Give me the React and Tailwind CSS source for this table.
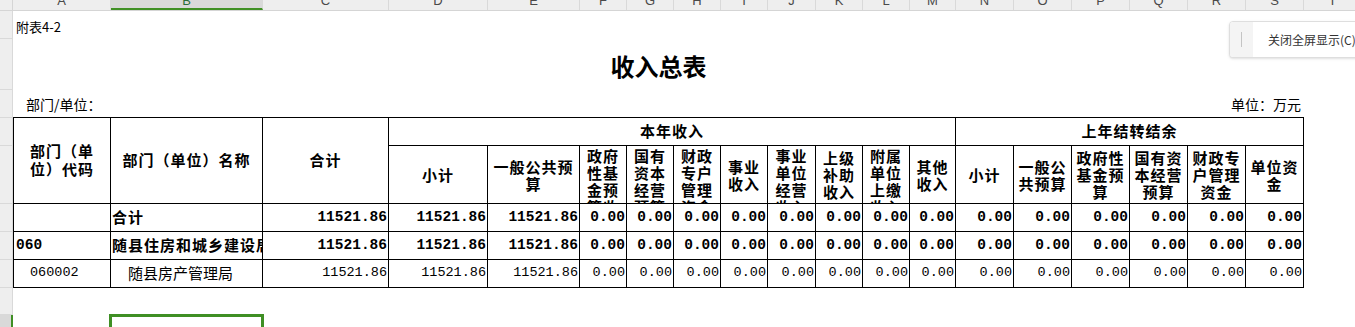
import React from "react"

const cjk = "font-['Noto_Sans_CJK_SC',sans-serif]"
const mono = "font-['Liberation_Mono','Noto_Sans_CJK_SC',monospace]"

const letters = [
  ["A", "w-[98px]"], ["B", "w-[152px]"], ["C", "w-[126px]"], ["D", "w-[99px]"], ["E", "w-[92px]"],
  ["F", "w-[47px]"], ["G", "w-[47px]"], ["H", "w-[47px]"], ["I", "w-[47px]"], ["J", "w-[48px]"],
  ["K", "w-[47px]"], ["L", "w-[47px]"], ["M", "w-[46px]"], ["N", "w-[58px]"], ["O", "w-[58px]"],
  ["P", "w-[58px]"], ["Q", "w-[58px]"], ["R", "w-[58px]"], ["S", "w-[58px]"], ["T", "w-[58px]"],
]

// sub headers under 本年收入 / 上年结转结余 ; clip = text taller than cell, starts at top
const subHeads = [
  { lines: ["小计"] },
  { lines: ["一般公共预", "算"] },
  { lines: ["政府", "性基", "金预", "算收"], clip: true },
  { lines: ["国有", "资本", "经营", "预算"], clip: true },
  { lines: ["财政", "专户", "管理", "资金"], clip: true },
  { lines: ["事业", "收入"] },
  { lines: ["事业", "单位", "经营", "收入"], clip: true },
  { lines: ["上级", "补助", "收入"] },
  { lines: ["附属", "单位", "上缴", "收入"], clip: true },
  { lines: ["其他", "收入"] },
  { lines: ["小计"] },
  { lines: ["一般公", "共预算"] },
  { lines: ["政府性", "基金预", "算"] },
  { lines: ["国有资", "本经营", "预算"] },
  { lines: ["财政专", "户管理", "资金"] },
  { lines: ["单位资", "金"] },
]

// C, D, E then F..S
const nums = ["11521.86", "11521.86", "11521.86", ...Array(14).fill("0.00")]

const rows = [
  { code: "", name: "合计", bold: true },
  { code: "060", name: "随县住房和城乡建设局", bold: true },
  { code: "060002", name: "随县房产管理局", bold: false },
]

const gutterRows = ["h-[28px]", "h-[51px]", "h-[28px]", "h-[28px]", "h-[58px]", "h-[28px]", "h-[28px]", "h-[28px]", "h-[27px]"]

const cell = "border-r border-b border-black overflow-hidden"

export default function App() {
  return (
    <div className="w-[1355px] h-[327px] overflow-hidden bg-white relative text-black">
      {/* column letters */}
      <div className="flex h-[11px] bg-[#eeeeee] border-b border-[#d5d5d5] font-['Liberation_Sans',sans-serif]">
        <div className="w-[13px] shrink-0 border-r border-[#d5d5d5]" />
        {letters.map(([l, w]) => (
          <div
            key={l}
            className={`${w} shrink-0 h-[10px] overflow-hidden text-center border-r border-[#d9d9d9] ${
              l === "B" ? "bg-[#d9d9d9] border-b-2 border-b-[#3f8f24] text-[#2b6e3a]" : "text-[#4a4a4a]"
            }`}
          >
            <span className="block text-[13px] leading-[13px] -mt-[6px]">{l}</span>
          </div>
        ))}
      </div>

      <div className="flex">
        {/* row gutter */}
        <div className="w-[13px] shrink-0 flex flex-col">
          {gutterRows.map((h, i) => (
            <div key={i} className={`${h} bg-[#eeeeee] border-b border-r border-[#d9d9d9]`} />
          ))}
          <div className="h-[20px] bg-[#d9d9d9] border-r-2 border-[#3f8f24]" />
        </div>

        {/* sheet */}
        <div className={`flex flex-col w-[1291px] ${cjk}`}>
          <div className="h-[28px] flex items-center pl-[3px] pt-[3px] text-[13px]">附表4-2</div>
          <div className="h-[51px] flex items-center justify-center pt-[2px] text-[24px] font-bold">收入总表</div>
          <div className="h-[27px] flex items-center justify-between pl-[13px] pr-[3px] pt-[2px] text-[14px]">
            <span>部门/单位：</span>
            <span>单位：万元</span>
          </div>

          {/* table */}
          <div className="grid grid-cols-[97px_152px_126px_99px_92px_47px_47px_47px_47px_48px_47px_47px_46px_58px_58px_58px_58px_58px_58px] grid-rows-[28px_58px_28px_28px_28px] border-l border-t border-black text-[15px] font-bold">
            <div className={`${cell} row-span-2 flex flex-col items-center justify-center leading-[18px] pb-[1px] tracking-[1px]`}>
              <span>部门（单</span>
              <span>位）代码</span>
            </div>
            <div className={`${cell} row-span-2 flex items-center justify-center pb-[1px] tracking-[1px]`}>部门（单位）名称</div>
            <div className={`${cell} row-span-2 flex items-center justify-center pb-[1px] tracking-[1px]`}>合计</div>
            <div className={`${cell} col-span-10 flex items-center justify-center tracking-[1px]`}>本年收入</div>
            <div className={`${cell} col-span-6 flex items-center justify-center tracking-[1px]`}>上年结转结余</div>
            {subHeads.map((h, i) => (
              <div
                key={i}
                className={`${cell} flex flex-col items-center leading-[17px] tracking-[1px] ${h.clip ? "justify-start pt-[1px]" : "justify-center"}`}
              >
                {h.lines.map((t, j) => (
                  <span key={j} className="whitespace-nowrap">{t}</span>
                ))}
              </div>
            ))}

            {rows.map((r) => (
              <React.Fragment key={r.name}>
                <div
                  className={`${cell} flex items-center whitespace-nowrap ${
                    r.bold ? `${mono} text-[14.5px] font-bold pl-[2px]` : `${mono} text-[13.5px] font-normal pl-[16px]`
                  }`}
                >
                  {r.code}
                </div>
                <div
                  className={`${cell} flex items-center whitespace-nowrap ${
                    r.bold ? "font-bold pl-[1px] tracking-[1px]" : "font-normal pl-[17px]"
                  }`}
                >
                  {r.name}
                </div>
                {nums.map((n, i) => (
                  <div
                    key={i}
                    className={`${cell} ${mono} flex items-center justify-end pr-[1px] ${
                      r.bold ? "text-[14.5px] font-bold" : "text-[13.5px] font-normal"
                    }`}
                  >
                    {n}
                  </div>
                ))}
              </React.Fragment>
            ))}
          </div>

          {/* selected cell B */}
          <div className="h-[26px]" />
          <div className="ml-[96px] w-[155px] h-[30px] border-[3px] border-[#3f8f24]" />
        </div>
      </div>

      {/* full screen toast */}
      <div className={`absolute left-[1229px] top-[21px] w-[140px] h-[37px] flex rounded-[4px] border border-[#dedede] bg-white shadow-sm overflow-hidden ${cjk}`}>
        <div className="w-[23px] shrink-0 bg-[#f4f4f4] flex items-center justify-center">
          <div className="w-px h-[15px] bg-[#c4c4c4]" />
        </div>
        <div className="pl-[15px] flex items-center text-[12px] text-[#333333] whitespace-nowrap">关闭全屏显示(C)</div>
      </div>
    </div>
  )
}
